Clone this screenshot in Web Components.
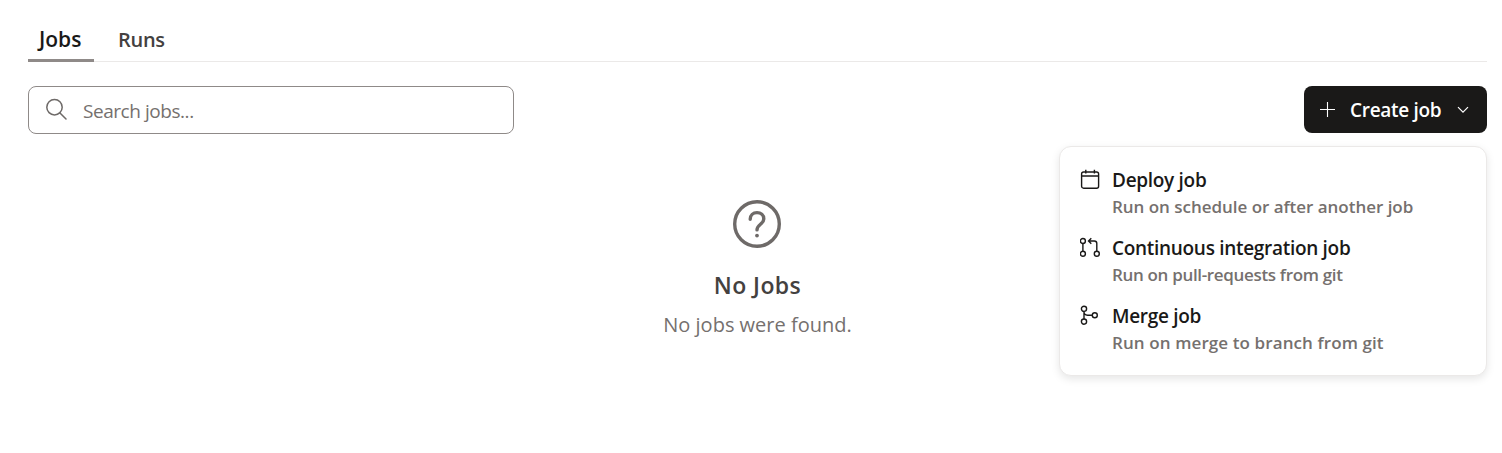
<!DOCTYPE html>
<html>
<head>
<meta charset="utf-8">
<title>Jobs</title>
<style>
  html, body { margin: 0; background: #fff; }
  body { font-family: "Open Sans", "Noto Sans", sans-serif; color: #1a1918; }
</style>
</head>
<body>
<jobs-page></jobs-page>

<template id="tab-bar-tpl">
  <style>
    :host { display: flex; height: 50px; padding-top: 12px; box-sizing: border-box; border-bottom: 1px solid #ebe9e8; margin-top: 12px; }
  </style>
  <slot></slot>
</template>

<template id="tab-item-tpl">
  <style>
    :host { display: block; box-sizing: border-box; height: 38px; padding: 2px 11px 0; margin-bottom: -1px; margin-right: 13px; font-size: 20px; line-height: 27px; font-weight: 600; letter-spacing: -0.3px; color: #44413f; }
    :host([active]) { color: #1a1918; border-bottom: 3px solid #8f8a88; width: 66px; font-size: 21px; letter-spacing: 0; }
  </style>
  <slot></slot>
</template>

<template id="search-box-tpl">
  <style>
    :host { display: flex; align-items: center; box-sizing: border-box; width: 486px; height: 48px; border: 1px solid #8f8a88; border-radius: 8px; padding-left: 16px; }
    svg { width: 22px; height: 22px; flex: none; margin-top: -2px; }
    span { margin-left: 16px; padding-top: 2px; font-size: 19px; letter-spacing: -0.45px; color: #75706e; }
  </style>
  <svg viewBox="0 0 22 22" fill="none" stroke="#6e6a68" stroke-width="1.5" stroke-linecap="round"><circle cx="9.5" cy="9.2" r="7.7"/><path d="M15 15l6 6"/></svg>
  <span><slot></slot></span>
</template>

<template id="create-button-tpl">
  <style>
    :host { display: flex; align-items: center; box-sizing: border-box; width: 183px; height: 47px; border-radius: 8px; background: #1a1918; color: #fff; padding-left: 16px; }
    .plus { width: 15px; height: 15px; flex: none; }
    .label { margin-left: 15px; font-size: 19px; font-weight: 600; letter-spacing: -0.3px; white-space: nowrap; }
    .chev { width: 12px; height: 8px; margin-left: auto; margin-right: 18px; flex: none; }
  </style>
  <svg class="plus" viewBox="0 0 15 15" fill="none" stroke="#fff" stroke-width="1.1"><path d="M7.5 0v15M0 7.5h15"/></svg>
  <span class="label"><slot></slot></span>
  <svg class="chev" viewBox="0 0 12 8" fill="none" stroke="#fff" stroke-width="1.2"><path d="M1 1.2l5 5 5-5"/></svg>
</template>

<template id="menu-item-tpl">
  <style>
    :host { display: grid; grid-template-columns: 21px 1fr; column-gap: 11px; height: 68px; align-content: start; }
    .icon { display: flex; align-items: flex-start; justify-content: center; width: 21px; height: 28px; padding-top: 3px; box-sizing: border-box; }
    .title { font-size: 19px; line-height: 28px; font-weight: 600; letter-spacing: -0.3px; color: #1a1918; white-space: nowrap; }
    .sub { grid-column: 2; font-size: 17px; line-height: 25px; font-weight: 600; letter-spacing: var(--sub-spacing, -0.03px); color: #75706e; white-space: nowrap; }
  </style>
  <div class="icon"><slot name="icon"></slot></div>
  <div class="title"><slot name="title"></slot></div>
  <div class="sub"><slot name="sub"></slot></div>
</template>

<template id="create-menu-tpl">
  <style>
    :host { display: block; position: absolute; top: 60px; right: 0; width: 428px; height: 230px; box-sizing: border-box; padding: 19px 20px 0; background: #fff; border: 1px solid #ebe9e8; border-radius: 12px; box-shadow: 0 3px 8px rgba(0,0,0,.10); }
  </style>
  <slot></slot>
</template>

<template id="empty-state-tpl">
  <style>
    :host { display: flex; flex-direction: column; align-items: center; padding-top: 66px; }
    svg { width: 48px; height: 48px; margin-right: 2px; }
    .title { margin-top: 22px; font-size: 23px; line-height: 30px; font-weight: 600; letter-spacing: 0.4px; color: #44413f; }
    .msg { margin-top: 11px; font-size: 20px; line-height: 27px; color: #75706e; }
  </style>
  <svg viewBox="0 0 48 48" fill="none" stroke="#6e6a68" stroke-width="3.4" stroke-linecap="round">
    <circle cx="24" cy="24" r="22.3"/>
    <path d="M17.2 19.2c0-3.9 3-6.6 6.8-6.6s6.8 2.6 6.8 6.3c0 5.4-6.8 5.3-6.8 11"/>
    <circle cx="24" cy="35.6" r="1.2" fill="#6e6a68" stroke-width="1.4"/>
  </svg>
  <div class="title"><slot name="title"></slot></div>
  <div class="msg"><slot name="msg"></slot></div>
</template>

<template id="jobs-page-tpl">
  <style>
    :host { display: block; min-height: 453px; box-sizing: border-box; padding: 1px 15px 0 28px; margin-top: -1px; }
    .bar { position: relative; display: flex; justify-content: space-between; align-items: flex-start; margin-top: 24px; }
    svg { display: block; width: 21px; height: 21px; }
  </style>
  <tab-bar>
    <tab-item active>Jobs</tab-item>
    <tab-item>Runs</tab-item>
  </tab-bar>
  <div class="bar">
    <search-box>Search jobs...</search-box>
    <create-button>Create job</create-button>
    <create-menu>
      <menu-item>
        <svg slot="icon" viewBox="0 0 21 21" fill="none" stroke="#1a1918" stroke-width="1.4"><rect x="1.6" y="3" width="17" height="16.2" rx="2"/><path d="M1.6 7h17M5.8 .8v3.6M14.4 .8v3.6"/></svg>
        <span slot="title">Deploy job</span>
        <span slot="sub">Run on schedule or after another job</span>
      </menu-item>
      <menu-item style="--sub-spacing: -0.33px">
        <svg slot="icon" viewBox="0 0 21 21" fill="none" stroke="#1a1918" stroke-width="1.4"><circle cx="2.9" cy="4" r="2.5"/><circle cx="2.9" cy="16.8" r="2.5"/><circle cx="16.8" cy="16.8" r="2.5"/><path d="M2.9 6.5v7.8M16.8 14.3V6.5a2.5 2.5 0 0 0-2.5-2.5H8.6M11.3 1.2L8.5 4l2.8 2.8"/></svg>
        <span slot="title">Continuous integration job</span>
        <span slot="sub">Run on pull-requests from git</span>
      </menu-item>
      <menu-item style="--sub-spacing: 0.1px">
        <svg slot="icon" viewBox="0 0 21 21" fill="none" stroke="#1a1918" stroke-width="1.4"><circle cx="4" cy="3.8" r="2.6"/><circle cx="4" cy="16.6" r="2.6"/><circle cx="14.8" cy="10.2" r="2.5"/><path d="M4 6.4v7.6M4 6.8c0 2.2 1.6 3.4 3.5 3.4h4.8"/></svg>
        <span slot="title">Merge job</span>
        <span slot="sub">Run on merge to branch from git</span>
      </menu-item>
    </create-menu>
  </div>
  <empty-state>
    <span slot="title">No Jobs</span>
    <span slot="msg">No jobs were found.</span>
  </empty-state>
</template>

<script>
  function register(tag, tplId) {
    customElements.define(tag, class extends HTMLElement {
      constructor() {
        super()
        this.attachShadow({ mode: 'open' })
        this.shadowRoot.appendChild(document.getElementById(tplId).content.cloneNode(true))
      }
    })
  }

  register('tab-bar', 'tab-bar-tpl')
  register('tab-item', 'tab-item-tpl')
  register('search-box', 'search-box-tpl')
  register('create-button', 'create-button-tpl')
  register('menu-item', 'menu-item-tpl')
  register('create-menu', 'create-menu-tpl')
  register('empty-state', 'empty-state-tpl')
  register('jobs-page', 'jobs-page-tpl')
</script>
</body>
</html>
